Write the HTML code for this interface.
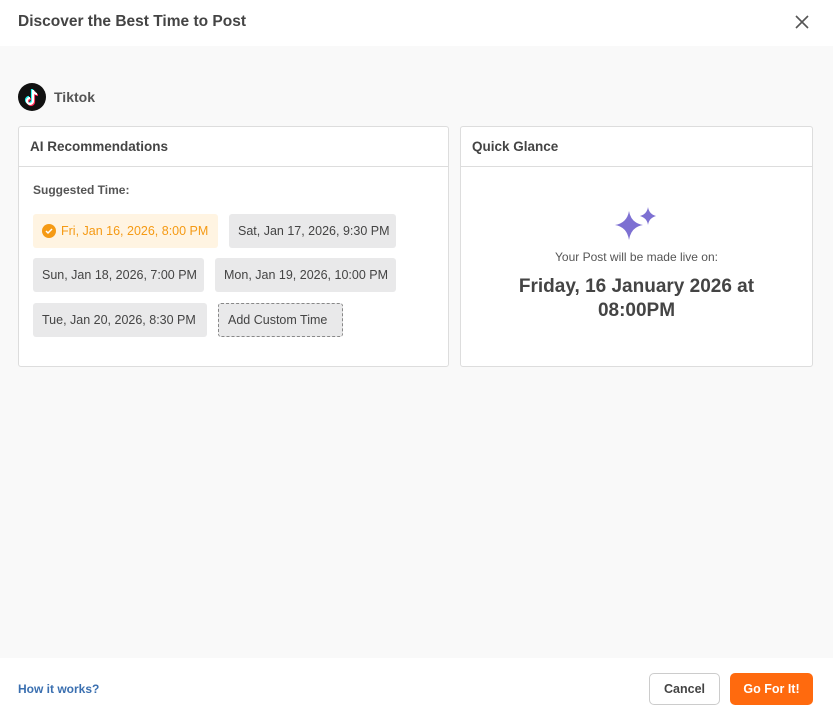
<!DOCTYPE html>
<html><head><style>
*{box-sizing:border-box;margin:0;padding:0}
body{width:833px;height:716px;background:#f9f9f9;font-family:"Liberation Sans",sans-serif;color:#444;position:relative;overflow:hidden}
.hdr{position:absolute;left:0;top:0;width:833px;height:46px;background:#fff}
.hdr h1{position:absolute;left:18px;top:13px;font-size:15.5px;font-weight:bold;color:#444}
.x{position:absolute;left:795px;top:15px}
.tt{position:absolute;left:18px;top:83px;width:28px;height:28px;border-radius:50%;background:#111}
.ttl{position:absolute;left:54px;top:89px;font-size:14px;font-weight:bold;color:#555}
.card{position:absolute;top:126px;height:241px;background:#fff;border:1px solid #ddd;border-radius:3px}
.card .ch{height:40px;border-bottom:1px solid #ddd;padding:12px 11px;font-size:13.5px;font-weight:bold;color:#444}
.chip{position:absolute;height:34px;background:#e9e9ea;border-radius:3px;font-size:12.5px;color:#444;line-height:34px;padding-left:9px}
.f{position:absolute;left:0;top:658px;width:833px;height:58px;background:#fff}
</style></head><body>
<div class="hdr"><h1>Discover the Best Time to Post</h1>
<svg class="x" width="14" height="14" viewBox="0 0 14 14"><path d="M1 1L13 13M13 1L1 13" stroke="#555" stroke-width="1.6"/></svg></div>
<div class="tt"><svg width="28" height="28" viewBox="0 0 28 28"><path d="M15 7v11a3 3 0 1 1-3-3M15 7c0 2 2 4 4 4" fill="none" stroke="#25f4ee" stroke-width="2.2" transform="translate(-1,-1)"/><path d="M15 7v11a3 3 0 1 1-3-3M15 7c0 2 2 4 4 4" fill="none" stroke="#fe2c55" stroke-width="2.2" transform="translate(1,1)"/><path d="M15 7v11a3 3 0 1 1-3-3M15 7c0 2 2 4 4 4" fill="none" stroke="#fff" stroke-width="2.2"/></svg></div>
<div class="ttl">Tiktok</div>
<div class="card" style="left:18px;width:431px">
<div class="ch">AI Recommendations</div>
<div style="position:absolute;left:14px;top:56px;font-size:12px;font-weight:bold;color:#555">Suggested Time:</div>
<div class="chip" style="left:14px;top:87px;width:185px;background:#fff4e2;color:#f59a14;padding-left:28px"><span style="position:absolute;left:9px;top:10px;width:14px;height:14px;border-radius:50%;background:#f59a14"></span><svg style="position:absolute;left:12px;top:13px" width="8" height="8" viewBox="0 0 8 8"><path d="M1 4l2 2 4-4" stroke="#fff" stroke-width="1.5" fill="none"/></svg>Fri, Jan 16, 2026, 8:00 PM</div>
<div class="chip" style="left:210px;top:87px;width:167px">Sat, Jan 17, 2026, 9:30 PM</div>
<div class="chip" style="left:14px;top:131px;width:171px">Sun, Jan 18, 2026, 7:00 PM</div>
<div class="chip" style="left:196px;top:131px;width:181px">Mon, Jan 19, 2026, 10:00 PM</div>
<div class="chip" style="left:14px;top:176px;width:174px">Tue, Jan 20, 2026, 8:30 PM</div>
<div class="chip" style="left:199px;top:176px;width:125px;border:1px dashed #888;line-height:32px">Add Custom Time</div>
</div>
<div class="card" style="left:460px;width:353px">
<div class="ch">Quick Glance</div>
<svg style="position:absolute;left:154px;top:80px" width="46" height="36" viewBox="0 0 46 36"><path d="M14 4Q16 16 28 18Q16 20 14 33Q12 20 0 18Q12 16 14 4Z" fill="#7d70d2"/><path d="M33 0Q34 7 41 9Q34 11 33 18Q32 11 25 9Q32 7 33 0Z" fill="#7d70d2"/></svg>
<div style="position:absolute;left:0;width:351px;top:123px;text-align:center;font-size:12px;color:#555">Your Post will be made live on:</div>
<div style="position:absolute;left:0;width:351px;top:148px;text-align:center;font-size:19px;font-weight:bold;color:#444;line-height:24px">Friday, 16 January 2026 at<br>08:00PM</div>
</div>
<div class="f">
<div style="position:absolute;left:18px;top:24px;font-size:12px;font-weight:bold;color:#3a6fb0">How it works?</div>
<div style="position:absolute;left:649px;top:15px;width:71px;height:32px;border:1px solid #ccc;border-radius:5px;text-align:center;line-height:30px;font-size:12.5px;font-weight:bold;color:#444">Cancel</div>
<div style="position:absolute;left:730px;top:15px;width:83px;height:32px;background:#ff6a0e;border-radius:5px;text-align:center;line-height:32px;font-size:12.5px;font-weight:bold;color:#fff">Go For It!</div>
</div>
</body></html>
